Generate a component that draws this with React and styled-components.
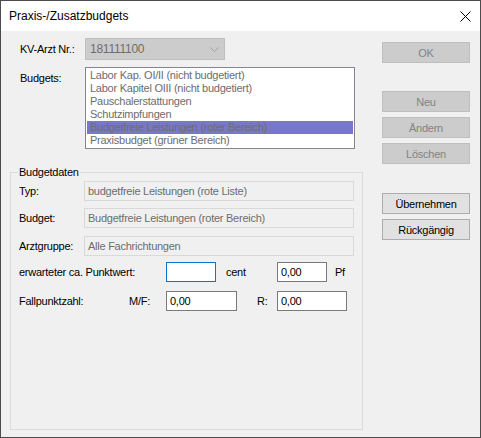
import React from 'react'
import styled, { createGlobalStyle } from 'styled-components'

const Global = createGlobalStyle`
  html, body { margin: 0; padding: 0; background: #fff; }
  * { box-sizing: border-box; }
  body { font-family: "Liberation Sans", Arial, sans-serif; font-size: 11px; color: #000; }
`

const Window = styled.div`
  width: 481px;
  height: 438px;
  border: 1px solid #4c4c4c;
  background: #f0f0f0;
  display: flex;
  flex-direction: column;
  letter-spacing: -0.25px;
`

const TitleBar = styled.div`
  height: 30px;
  background: #fff;
  display: flex;
  align-items: center;
  justify-content: space-between;
  padding: 0 9px 0 8px;
  font-size: 12px;
  letter-spacing: 0;
  color: #000;
`

const Body = styled.div`
  flex: 1;
  display: flex;
  gap: 19px;
  padding: 7px 10px 7px 9px;
`

const Left = styled.div`
  width: 353px;
  display: flex;
  flex-direction: column;
`

const Right = styled.div`
  width: 88px;
  display: flex;
  flex-direction: column;
`

const Row = styled.div`
  display: flex;
  align-items: ${p => p.$top ? 'flex-start' : 'center'};
  margin-top: ${p => p.$mt || 0}px;
  padding-left: ${p => p.$pl || 0}px;
`

const Label = styled.span`
  width: ${p => p.$w}px;
  flex: none;
  line-height: 13px;
  padding-top: ${p => p.$pt || 0}px;
  padding-left: ${p => p.$pl || 0}px;
  white-space: nowrap;
`

const Combo = styled.div`
  width: 140px;
  height: 22px;
  background: #cccccc;
  border: 1px solid #bfbfbf;
  color: #6d6d6d;
  display: flex;
  align-items: center;
  justify-content: space-between;
  padding: 0 5px 0 4px;
  font-size: 12px;
`

const ListBox = styled.div`
  width: 270px;
  height: 82px;
  background: #fff;
  border: 1px solid #82878f;
  padding: 1px;
`

const Item = styled.div`
  height: 13px;
  line-height: 13px;
  padding-left: 3px;
  color: #6d6d6d;
  white-space: nowrap;
  overflow: hidden;
  background: ${p => p.$sel ? '#7878c8' : 'transparent'};
`

const Group = styled.fieldset`
  flex: 1;
  margin: 17px 0 0 0;
  padding: 2px 8px 0 8px;
  border: 1px solid #dcdcdc;
  min-width: 0;
`

const Legend = styled.legend`
  padding: 0 1px;
  margin-left: -1px;
  line-height: 13px;
  font-size: 11px;
`

const Field = styled.div`
  width: 270px;
  height: 20px;
  border: 1px solid #d9d9d9;
  background: #f0f0f0;
  color: #6d6d6d;
  line-height: 18px;
  padding-left: 3px;
  white-space: nowrap;
  overflow: hidden;
`

const Input = styled.div`
  width: ${p => p.$w}px;
  height: 20px;
  border: 1px solid ${p => p.$focus ? '#0078d7' : '#7a7a7a'};
  background: #fff;
  line-height: 18px;
  padding-left: 3px;
  flex: none;
`

const Button = styled.div`
  height: 21px;
  margin-top: ${p => p.$mt || 0}px;
  border: 1px solid ${p => p.$off ? '#bfbfbf' : '#adadad'};
  background: ${p => p.$off ? '#cccccc' : '#e1e1e1'};
  color: ${p => p.$off ? '#838383' : '#000'};
  display: flex;
  align-items: center;
  justify-content: center;
  font-size: 11px;
`

const items = [
  'Labor Kap. OI/II (nicht budgetiert)',
  'Labor Kapitel OIII (nicht budgetiert)',
  'Pauschalerstattungen',
  'Schutzimpfungen',
  'Budgetfreie Leistungen (roter Bereich)',
  'Praxisbudget (grüner Bereich)',
]

export default function App() {
  return (
    <>
      <Global />
      <Window>
        <TitleBar>
          <span>Praxis-/Zusatzbudgets</span>
          <svg width="11" height="11" viewBox="0 0 11 11">
            <path d="M0.5 0.5 L10.5 10.5 M10.5 0.5 L0.5 10.5" stroke="#000" strokeWidth="1" />
          </svg>
        </TitleBar>
        <Body>
          <Left>
            <Row $pl={10}>
              <Label $w={65}>KV-Arzt Nr.:</Label>
              <Combo>
                <span>181111100</span>
                <svg width="9" height="5" viewBox="0 0 9 5">
                  <path d="M0.5 0.5 L4.5 4.5 L8.5 0.5" stroke="#a2a2a2" fill="none" />
                </svg>
              </Combo>
            </Row>
            <Row $top $mt={7} $pl={10}>
              <Label $w={65} $pt={5}>Budgets:</Label>
              <ListBox>
                {items.map((t, i) => (
                  <Item key={t} $sel={i === 4}>{t}</Item>
                ))}
              </ListBox>
            </Row>
            <Group>
              <Legend>Budgetdaten</Legend>
              <Row>
                <Label $w={65}>Typ:</Label>
                <Field>budgetfreie Leistungen (rote Liste)</Field>
              </Row>
              <Row $mt={7}>
                <Label $w={65}>Budget:</Label>
                <Field>Budgetfreie Leistungen (roter Bereich)</Field>
              </Row>
              <Row $mt={8}>
                <Label $w={65}>Arztgruppe:</Label>
                <Field>Alle Fachrichtungen</Field>
              </Row>
              <Row $mt={6}>
                <Label $w={147}>erwarteter ca. Punktwert:</Label>
                <Input $w={50} $focus />
                <Label $w={61} $pl={10}>cent</Label>
                <Input $w={50}>0,00</Input>
                <Label $w={28} $pl={8}>Pf</Label>
              </Row>
              <Row $mt={9}>
                <Label $w={110}>Fallpunktzahl:</Label>
                <Label $w={37}>M/F:</Label>
                <Input $w={71}>0,00</Input>
                <Label $w={40} $pl={20}>R:</Label>
                <Input $w={70}>0,00</Input>
              </Row>
            </Group>
          </Left>
          <Right>
            <Button $off $mt={4}>OK</Button>
            <Button $off $mt={28}>Neu</Button>
            <Button $off $mt={5}>Ändern</Button>
            <Button $off $mt={5}>Löschen</Button>
            <Button $mt={29}>Übernehmen</Button>
            <Button $mt={5}>Rückgängig</Button>
          </Right>
        </Body>
      </Window>
    </>
  )
}
